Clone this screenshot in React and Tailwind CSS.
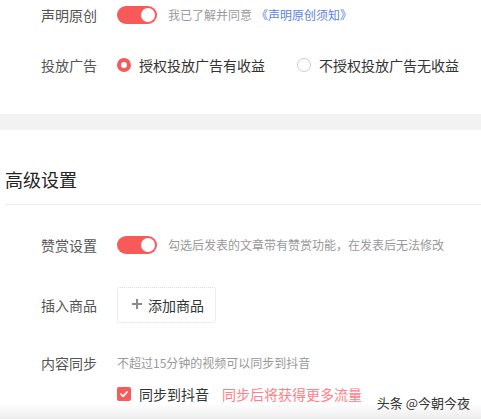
export default function App() {
    const font = { fontFamily: '"Noto Sans CJK SC", "Noto Sans", sans-serif' };

    return (
        <div className="relative w-[481px] h-[419px] overflow-hidden bg-white" style={font}>
            {/* 原创 / 广告 */}
            <div className="pl-[41px]">
                <div className="flex items-center h-[30px]">
                    <span className="w-[76px] text-[14px] leading-[20px] text-[#555]">声明原创</span>
                    <Toggle />
                    <span className="ml-[11px] text-[12px] leading-[18px] text-[#999]">我已了解并同意</span>
                    <span className="ml-[4px] text-[12px] leading-[18px] text-[#5b7fe0]">《声明原创须知》</span>
                </div>
                <div className="flex items-center h-[30px] mt-[20px]">
                    <span className="w-[76px] text-[14px] leading-[20px] text-[#555]">投放广告</span>
                    <div className="flex items-center">
                        <span className="w-[14px] h-[14px] rounded-full border-[4px] border-[#f85959] bg-white"></span>
                        <span className="ml-[8px] text-[14px] leading-[20px] text-[#333]">授权投放广告有收益</span>
                    </div>
                    <div className="flex items-center ml-[32px]">
                        <span className="w-[14px] h-[14px] rounded-full border border-[#ccc] bg-white"></span>
                        <span className="ml-[8px] text-[14px] leading-[20px] text-[#333]">不授权投放广告无收益</span>
                    </div>
                </div>
            </div>

            <div className="mt-[34px] h-[16px] bg-[#f2f2f2]"></div>

            {/* 高级设置 */}
            <div className="pl-[5px]">
                <div className="pt-[38px] pb-[13px] border-b border-[#ebebeb]">
                    <h2 className="text-[18px] leading-[23px] text-[#222]">高级设置</h2>
                </div>
            </div>

            <div className="pl-[41px]">
                <div className="flex items-center h-[30px] mt-[25px]">
                    <span className="w-[76px] text-[14px] leading-[20px] text-[#555]">赞赏设置</span>
                    <Toggle />
                    <span className="ml-[11px] text-[12px] leading-[18px] text-[#999]">勾选后发表的文章带有赞赏功能，在发表后无法修改</span>
                </div>
                <div className="flex items-center h-[36px] mt-[27px]">
                    <span className="w-[76px] text-[14px] leading-[20px] text-[#555]">插入商品</span>
                    <button className="flex items-center h-[36px] w-[99px] pl-[14px] border border-dotted border-[#dcdcdc] rounded-[3px]">
                        <svg width="10" height="10" viewBox="0 0 10 10" className="-mt-[3px]">
                            <path d="M5 0 V10 M0 5 H10" stroke="#8a8a8a" strokeWidth="2" />
                        </svg>
                        <span className="ml-[6px] text-[14px] leading-[20px] text-[#333]">添加商品</span>
                    </button>
                </div>
                <div className="flex items-center h-[20px] mt-[30px]">
                    <span className="w-[76px] text-[14px] leading-[20px] text-[#555]">内容同步</span>
                    <span className="text-[12px] leading-[18px] text-[#999]">不超过15分钟的视频可以同步到抖音</span>
                </div>
                <div className="flex items-center h-[20px] mt-[11px] pl-[76px]">
                    <span className="flex items-center justify-center w-[14px] h-[14px] rounded-[2px] bg-[#f85959]">
                        <svg width="10" height="10" viewBox="0 0 10 10">
                            <path d="M2 5.2 L4.2 7.3 L8 3" fill="none" stroke="#fff" strokeWidth="1.8" strokeLinecap="round" strokeLinejoin="round" />
                        </svg>
                    </span>
                    <span className="ml-[8px] text-[14px] leading-[20px] text-[#333]">同步到抖音</span>
                    <span className="ml-[13px] text-[14px] leading-[20px] text-[#ff8088]">同步后将获得更多流量</span>
                </div>
            </div>

            {/* 底部水印 */}
            <div className="absolute left-0 right-0 bottom-0 h-[16px] bg-gradient-to-b from-white/0 to-[#ededed]"></div>
            <div className="absolute right-[11px] bottom-[8px] text-[13px] leading-[16px] text-[#333]">头条 @今朝今夜</div>
        </div>
    );
}

function Toggle() {
    return (
        <span className="relative flex items-center w-[40px] h-[18px] rounded-full bg-[#f85959]">
            <span className="absolute right-[2px] w-[14px] h-[14px] rounded-full bg-white"></span>
        </span>
    );
}
